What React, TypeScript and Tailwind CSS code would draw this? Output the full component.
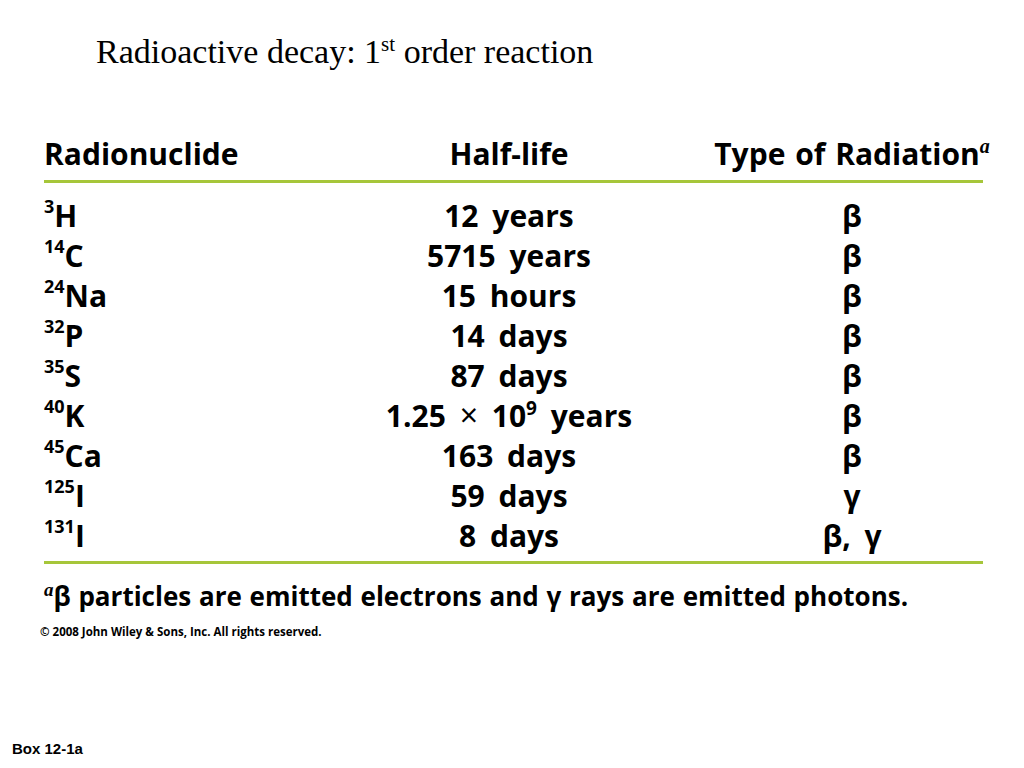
const ROWS: { sup: string; el: string; life: React.ReactNode; rad: string }[] = [
  { sup: "3", el: "H", life: "12 years", rad: "β" },
  { sup: "14", el: "C", life: "5715 years", rad: "β" },
  { sup: "24", el: "Na", life: "15 hours", rad: "β" },
  { sup: "32", el: "P", life: "14 days", rad: "β" },
  { sup: "35", el: "S", life: "87 days", rad: "β" },
  {
    sup: "40",
    el: "K",
    life: (
      <>
        1.25 <span className="font-normal text-[32px] leading-none">×</span> 10
        <span className="relative -top-[12px] text-[19px]">9</span> years
      </>
    ),
    rad: "β",
  },
  { sup: "45", el: "Ca", life: "163 days", rad: "β" },
  { sup: "125", el: "I", life: "59 days", rad: "γ" },
  { sup: "131", el: "I", life: "8 days", rad: "β, γ" },
];

export default function App() {
  return (
    <div className="flex h-[768px] w-[1024px] flex-col bg-white text-black">
      <h1 className="pl-[96px] pt-[32px] font-['Liberation_Serif',serif] text-[34px] leading-[40px]">
        Radioactive decay: 1<span className="relative -top-[12px] text-[21px]">st</span> order reaction
      </h1>

      <div className="mt-[55px] ml-[44px] w-[939px] font-['Open_Sans',sans-serif] font-bold">
        <div className="grid h-[34px] grid-cols-[280px_370px_316px] items-center text-[30px] [word-spacing:2px]">
          <div>Radionuclide</div>
          <div className="text-center">Half-life</div>
          <div className="text-center">
            Type of Radiation
            <span className="relative -top-[12px] font-['Liberation_Serif',serif] text-[20px] italic">a</span>
          </div>
        </div>
        <div className="mt-[15px] h-[3px] bg-[#a6c63a]" />

        <div className="mt-[10px]">
          {ROWS.map((r) => (
            <div
              key={r.sup}
              className="grid h-[40px] grid-cols-[280px_370px_316px] items-center text-[30px] [word-spacing:6px]"
            >
              <div>
                <span className="relative -top-[14px] text-[18px]">{r.sup}</span>
                {r.el}
              </div>
              <div className="text-center whitespace-pre">{r.life}</div>
              <div className="text-center">{r.rad}</div>
            </div>
          ))}
        </div>
        <div className="mt-[8px] h-[3px] bg-[#a6c63a]" />

        <div className="mt-[12px] flex h-[40px] items-center text-[26px] [word-spacing:1px]">
          <span>
            <span className="relative -top-[10px] font-['Liberation_Serif',serif] text-[19px] italic">a</span>β particles
            are emitted electrons and γ rays are emitted photons.
          </span>
        </div>
        <div className="mt-[8px] -ml-[4px] text-[11.5px] leading-[16px]">
          © 2008 John Wiley &amp; Sons, Inc. All rights reserved.
        </div>
      </div>

      <div className="mt-auto pb-[8px] pl-[12px] font-['Liberation_Sans',sans-serif] text-[15px] font-bold">
        Box 12-1a
      </div>
    </div>
  );
}
